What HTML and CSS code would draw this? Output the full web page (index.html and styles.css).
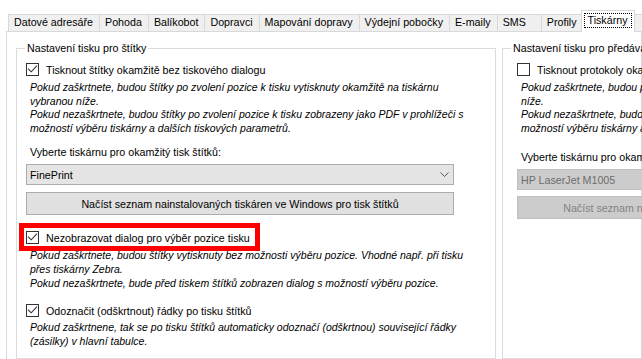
FILE: index.html
```html
<!DOCTYPE html>
<html lang="cs">
<head>
<meta charset="utf-8">
<title>Tiskárny</title>
<link rel="stylesheet" href="styles.css">
</head>
<body>
<div class="window">
  <div class="tabs">
    <div class="tab tab-first">Datové adresáře</div>
    <div class="tab">Pohoda</div>
    <div class="tab">Balíkobot</div>
    <div class="tab">Dopravci</div>
    <div class="tab">Mapování dopravy</div>
    <div class="tab">Výdejní pobočky</div>
    <div class="tab">E-maily</div>
    <div class="tab tab-sms">SMS</div>
    <div class="tab">Profily</div>
    <div class="tab active"><span class="focus">Tiskárny</span></div>
    <div class="tab tab-after">Ostatní</div>
  </div>
  <div class="page">
    <fieldset class="group group-labels">
      <legend>Nastavení tisku pro štítky</legend>
      <div class="group-body">
        <div class="check-row">
          <span class="cb"><svg width="11" height="11" viewBox="0 0 11 11"><polyline points="1,4.6 4.2,7.8 10,1.6" fill="none" stroke="#333" stroke-width="1.1"/></svg></span>
          <span>Tisknout štítky okamžitě bez tiskového dialogu</span>
        </div>
        <p class="hint">Pokud zaškrtnete, budou štítky po zvolení pozice k tisku vytisknuty okamžitě na tiskárnu<br>vybranou níže.<br>Pokud nezaškrtnete, budou štítky po zvolení pozice k tisku zobrazeny jako PDF v prohlížeči s<br>možností výběru tiskárny a dalších tiskových parametrů.</p>
        <div class="field-label">Vyberte tiskárnu pro okamžitý tisk štítků:</div>
        <div class="combo">
          <span>FinePrint</span>
          <svg class="chevron" width="9" height="5" viewBox="0 0 9 5"><polyline points="0.5,0.5 4.5,4.5 8.5,0.5" fill="none" stroke="#555" stroke-width="1"/></svg>
        </div>
        <div class="btn">Načíst seznam nainstalovaných tiskáren ve Windows pro tisk štítků</div>
        <div class="check-row row-dialog">
          <span class="cb"><svg width="11" height="11" viewBox="0 0 11 11"><polyline points="1,4.6 4.2,7.8 10,1.6" fill="none" stroke="#333" stroke-width="1.1"/></svg></span>
          <span>Nezobrazovat dialog pro výběr pozice tisku</span>
          <span class="highlight"></span>
        </div>
        <p class="hint">Pokud zaškrtnete, budou štítky vytisknuty bez možnosti výběru pozice. Vhodné např. při tisku<br>přes tiskárny Zebra.<br>Pokud nezaškrtnete, bude před tiskem štítků zobrazen dialog s možností výběru pozice.</p>
        <div class="check-row row-unmark">
          <span class="cb"><svg width="11" height="11" viewBox="0 0 11 11"><polyline points="1,4.6 4.2,7.8 10,1.6" fill="none" stroke="#333" stroke-width="1.1"/></svg></span>
          <span>Odoznačit (odškrtnout) řádky po tisku štítků</span>
        </div>
        <p class="hint hint-last">Pokud zaškrtnene, tak se po tisku štítků automaticky odoznačí (odškrtnou) související řádky<br>(zásilky) v hlavní tabulce.</p>
      </div>
    </fieldset>
    <fieldset class="group group-protocols">
      <legend>Nastavení tisku pro předávací protokoly</legend>
      <div class="group-body">
        <div class="check-row">
          <span class="cb"></span>
          <span>Tisknout protokoly okamžitě bez tiskového dialogu</span>
        </div>
        <p class="hint">Pokud zaškrtnete, budou předávací protokoly vytisknuty okamžitě na tiskárnu vybranou<br>níže.<br>Pokud nezaškrtnete, budou předávací protokoly zobrazeny jako PDF v prohlížeči s<br>možností výběru tiskárny a dalších tiskových parametrů.</p>
        <div class="field-label label-protocols">Vyberte tiskárnu pro okamžitý tisk protokolů:</div>
        <div class="combo combo-disabled">
          <span>HP LaserJet M1005</span>
        </div>
        <div class="btn btn-disabled">Načíst seznam nainstalovaných tiskáren ve Windows pro tisk protokolů</div>
      </div>
    </fieldset>
  </div>
</div>
</body>
</html>
```

FILE: styles.css
```css
html, body {
  margin: 0;
  padding: 0;
}

body {
  width: 642px;
  height: 359px;
  overflow: hidden;
  background: #ffffff;
  color: #000000;
  font-family: "Liberation Sans", Arial, sans-serif;
  font-size: 10.7px;
}

.window {
  width: 642px;
  height: 359px;
  overflow: hidden;
}

/* ---------- tab strip ---------- */
.tabs {
  display: flex;
  align-items: flex-end;
  height: 31px;
  padding-left: 8px;
}

.tab {
  box-sizing: border-box;
  flex: none;
  height: 17px;
  line-height: 15px;
  padding: 0 6px 0 5px;
  margin-left: -1px;
  background: #f0f0f0;
  border: 1px solid #d9d9d9;
  border-bottom: none;
  white-space: nowrap;
}

.tab-first {
  margin-left: 0;
}

.tab-sms {
  padding-right: 15px;
}

.tab-after {
  padding-left: 9px;
}

.tab.active {
  position: relative;
  z-index: 1;
  height: 22px;
  margin: 0 -2px -1px -3px;
  padding: 0 2px 0 2px;
  background: #ffffff;
}

.focus {
  display: block;
  margin-top: 2px;
  line-height: 13px;
  padding: 0 4px 0 3px;
  border: 1px dotted #000000;
}

/* ---------- tab page ---------- */
.page {
  display: flex;
  align-items: flex-start;
  gap: 6px;
  height: 318px;
  margin-left: 6px;
  padding: 9px 0 0 9px;
  border: 1px solid #d9d9d9;
  background: #ffffff;
}

.group {
  box-sizing: border-box;
  flex: none;
  height: 318px;
  min-width: 0;
  margin: 0;
  padding: 0;
  border: 1px solid #dcdcdc;
}

.group legend {
  margin-left: 8px;
  padding: 0 2px;
  line-height: 14px;
}

.group-labels {
  width: 480px;
}

.group-protocols {
  width: 480px;
}

.group-body {
  padding-left: 9px;
}

.group-protocols .group-body {
  padding-left: 14px;
}

/* ---------- controls ---------- */
.check-row {
  position: relative;
  display: flex;
  align-items: flex-start;
  height: 14px;
  line-height: 14px;
  margin-top: 8px;
  white-space: nowrap;
}

.cb {
  box-sizing: border-box;
  flex: none;
  display: flex;
  width: 13px;
  height: 13px;
  margin-right: 7px;
  border: 1px solid #333333;
  background: #ffffff;
}

.cb svg {
  display: block;
}

.hint {
  margin: 4px 0 0;
  padding-left: 4px;
  font-style: italic;
  font-size: 10.5px;
  line-height: 13.6px;
  white-space: nowrap;
}

.field-label {
  margin-top: 10px;
  padding-left: 4px;
  line-height: 14px;
  white-space: nowrap;
}

.label-protocols {
  margin-top: 15px;
}

.combo {
  box-sizing: border-box;
  display: flex;
  align-items: center;
  justify-content: space-between;
  width: 428px;
  height: 21px;
  margin-top: 5px;
  padding: 0 4px 0 3px;
  border: 1px solid #acacac;
  background: #e5e5e5;
  white-space: nowrap;
}

.chevron {
  display: block;
}

.btn {
  box-sizing: border-box;
  display: flex;
  align-items: center;
  justify-content: center;
  width: 428px;
  height: 23px;
  margin-top: 7px;
  border: 1px solid #adadad;
  background: #e1e1e1;
  white-space: nowrap;
}

.group-protocols .btn {
  margin-top: 6px;
}

.combo-disabled {
  border-color: #bfbfbf;
  background: #cccccc;
  color: #6d6d6d;
}

.btn-disabled {
  border-color: #bfbfbf;
  background: #cccccc;
  color: #838383;
}

.row-dialog {
  margin-top: 16px;
}

.row-unmark {
  margin-top: 14px;
}

.hint-last {
  margin-top: 3px;
}

/* red annotation frame drawn over the option */
.highlight {
  position: absolute;
  z-index: 2;
  left: -7px;
  top: -8px;
  box-sizing: border-box;
  width: 241px;
  height: 28px;
  border: 5px solid #ff0000;
}
```
